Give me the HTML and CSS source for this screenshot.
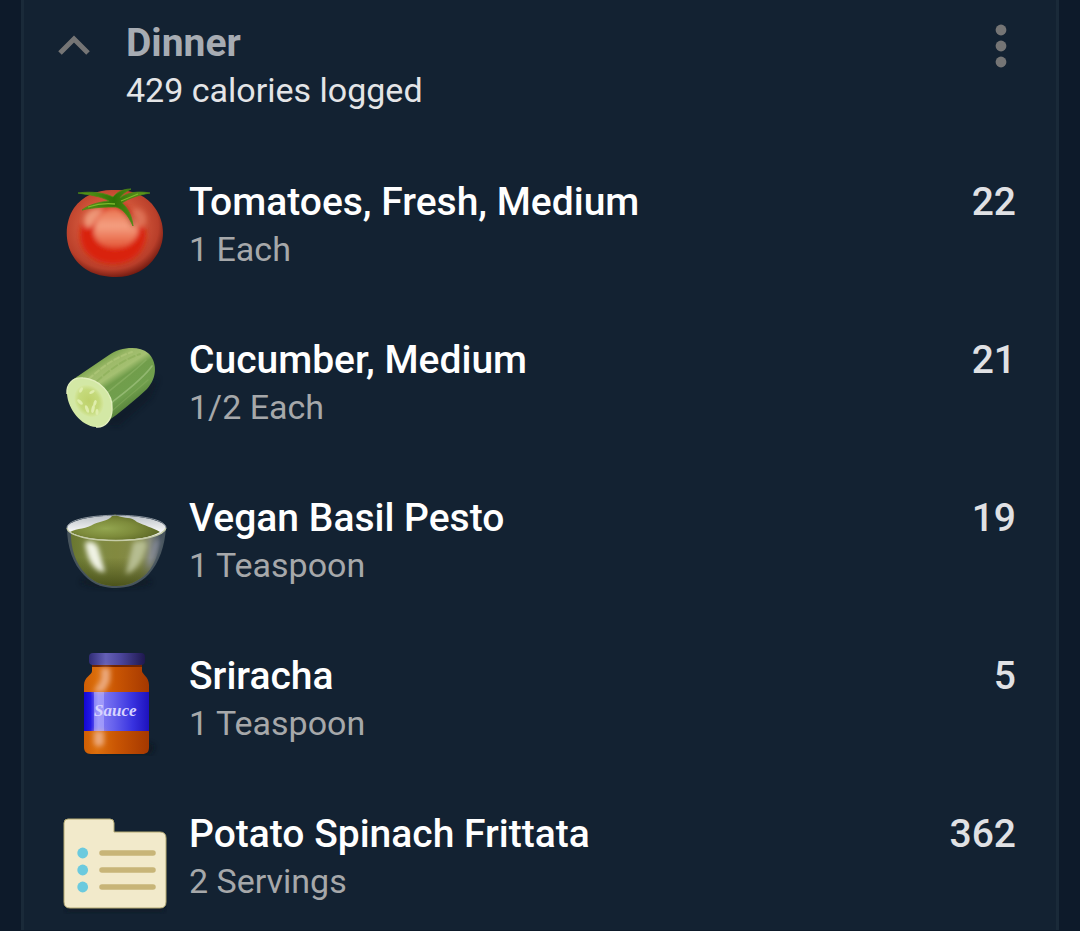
FILE: index.html
```html
<!DOCTYPE html>
<html lang="en">
<head>
  <meta charset="UTF-8">
  <meta name="viewport" content="width=device-width, initial-scale=1.0">
  <title>Dinner</title>
  <link rel="stylesheet" href="styles.css">
</head>
<body>
  <main class="meal">
    <header class="meal-header">
      <button class="icon-button toggle" type="button" aria-label="Collapse">
        <svg width="32" height="20" viewBox="0 0 32 20"><path d="M2 18 L16 4 L30 18" fill="none" stroke="#757575" stroke-width="5"/></svg>
      </button>
      <div class="meal-text">
        <h1 class="meal-title">Dinner</h1>
        <p class="meal-total">429 calories logged</p>
      </div>
      <button class="icon-button menu" type="button" aria-label="More options">
        <svg width="12" height="44" viewBox="0 0 12 44" fill="#757575"><circle cx="6" cy="6" r="5.4"/><circle cx="6" cy="22" r="5.4"/><circle cx="6" cy="38" r="5.4"/></svg>
      </button>
    </header>

    <ul class="foods">
      <li class="food">
        <svg class="food-icon" viewBox="0 0 104 104" aria-hidden="true">
          <defs>
            <radialGradient id="tomatoSkin" cx="46%" cy="42%" r="60%">
              <stop offset="0" stop-color="#dc6a4c"/>
              <stop offset=".55" stop-color="#cf5338"/>
              <stop offset=".82" stop-color="#b93f2a"/>
              <stop offset="1" stop-color="#6e180f"/>
            </radialGradient>
            <linearGradient id="tomatoShine" x1="0" y1="0" x2="0" y2="1">
              <stop offset="0" stop-color="#e8714d"/>
              <stop offset=".45" stop-color="#f5a082"/>
              <stop offset="1" stop-color="#e35535"/>
            </linearGradient>
            <linearGradient id="stem" x1="0" y1="0" x2="1" y2="0">
              <stop offset="0" stop-color="#5e9a1c"/>
              <stop offset=".5" stop-color="#2f7206"/>
              <stop offset="1" stop-color="#6a9c22"/>
            </linearGradient>
            <filter id="soft" x="-30%" y="-30%" width="160%" height="160%"><feGaussianBlur stdDeviation="2.4"/></filter>
          </defs>
          <path d="M52 12C67 11 84 17 92 30C102 44 103 63 93 78C84 92 70 99 53 99C35 99 19 93 10 78C1 64 2 43 11 30C20 17 36 11 52 12Z" fill="url(#tomatoSkin)"/>
          <g filter="url(#soft)">
            <path d="M17 58C17 40 31 28 50 28C69 28 83 41 83 59C80 77 67 86 50 86C33 86 18 76 17 58Z" fill="#d92008"/>
            <path d="M24 50C18 43 22 33 32 31L41 30L29 48Z" fill="#ee9677"/>
            <path d="M68 33C74 28 84 33 83 43C82 49 77 51 74 48Z" fill="#dd7155"/>
            <path d="M31 53C33 40 40 30 52 30C65 33 75 43 75 55C71 66 62 70 52 70C41 70 31 64 31 53Z" fill="url(#tomatoShine)"/>
          </g>
          <path d="M54 24C61 29 67 37 71 48" fill="none" stroke="#8a2b16" stroke-width="5" opacity=".5" filter="url(#soft)"/>
          <path d="M15 15C29 13 42 15 50 19C54 14 60 11 68 11C64 13 59 16 57 20C65 14 76 13 87 15C76 17 66 20 59 25C64 29 69 37 70 48C65 37 60 31 53 29C43 29 32 29 19 32C27 26 37 24 46 23C38 18 26 17 15 15Z" fill="url(#stem)" stroke="#4c8a14" stroke-width=".8"/>
          <path d="M25 29C34 26 44 25 52 26M58 23L75 16" fill="none" stroke="#7fb82c" stroke-width="1.3"/>
        </svg>
        <div class="food-text">
          <h2 class="food-name">Tomatoes, Fresh, Medium</h2>
          <p class="food-amount">1 Each</p>
        </div>
        <span class="food-calories">22</span>
      </li>

      <li class="food">
        <svg class="food-icon" viewBox="0 0 104 104" aria-hidden="true">
          <defs>
            <linearGradient id="cucumberSkin" gradientUnits="userSpaceOnUse" x1="34" y1="22" x2="66" y2="72">
              <stop offset="0" stop-color="#6f9c45"/>
              <stop offset=".2" stop-color="#9dba69"/>
              <stop offset=".38" stop-color="#a4c071"/>
              <stop offset=".5" stop-color="#719d4b"/>
              <stop offset=".78" stop-color="#709f4d"/>
              <stop offset="1" stop-color="#57833a"/>
            </linearGradient>
            <radialGradient id="cucumberCore">
              <stop offset="0" stop-color="#bed16a"/>
              <stop offset=".7" stop-color="#c5da7c"/>
              <stop offset="1" stop-color="#d5e8a2"/>
            </radialGradient>
          </defs>
          <path d="M40 88L85 50L96 42L88 62L56 90Z" fill="#0b1722" opacity=".5" filter="url(#soft)"/>
          <path d="M8 46C11 42 14 41 18 38L46 19C57 11 76 9 85 17C94 25 95 41 84 53C73 63 57 77 42 87Z" fill="url(#cucumberSkin)"/>
          <g fill="none" stroke-linecap="round" opacity=".6">
            <path d="M26 43C39 31 51 22 69 16" stroke="#b5cb7e" stroke-width="2" stroke-dasharray="5 3"/>
            <path d="M33 46C49 32 60 24 77 18" stroke="#8aae57" stroke-width="2" stroke-dasharray="7 3"/>
            <path d="M44 57C58 45 72 35 83 24" stroke="#8fb568" stroke-width="1.5"/>
            <path d="M48 67C62 56 79 44 89 30" stroke="#a9c988" stroke-width="1.6"/>
            <path d="M49 75C61 64 74 54 85 44" stroke="#85ab5d" stroke-width="1.2"/>
          </g>
          <path d="M4 58C3 48 10 41 20 42C36 43 50 57 49 73C49 84 42 92 33 91C18 90 5 73 4 58Z" fill="#d3e8a5"/>
          <path d="M4 58C3 48 10 41 20 42C36 43 50 57 49 73C49 84 42 92 33 91" fill="none" stroke="#e2efbd" stroke-width="1.4"/>
          <ellipse cx="26" cy="65" rx="14" ry="17" transform="rotate(-32 26 65)" fill="url(#cucumberCore)"/>
          <g fill="#dfedac">
            <ellipse cx="18" cy="54" rx="1.5" ry="3" transform="rotate(30 18 54)"/>
            <ellipse cx="29" cy="56" rx="1.5" ry="3" transform="rotate(60 29 56)"/>
            <ellipse cx="17" cy="66" rx="1.6" ry="3.5" transform="rotate(-45 17 66)"/>
            <ellipse cx="24" cy="73" rx="1.6" ry="4" transform="rotate(-20 24 73)"/>
            <ellipse cx="30" cy="73" rx="1.6" ry="4" transform="rotate(12 30 73)"/>
            <ellipse cx="32" cy="67" rx="1.5" ry="3" transform="rotate(20 32 67)"/>
            <ellipse cx="34" cy="76" rx="1.5" ry="3"/>
          </g>
        </svg>
        <div class="food-text">
          <h2 class="food-name">Cucumber, Medium</h2>
          <p class="food-amount">1/2 Each</p>
        </div>
        <span class="food-calories">21</span>
      </li>

      <li class="food">
        <svg class="food-icon" viewBox="0 0 104 104" aria-hidden="true">
          <defs>
            <linearGradient id="bowl" x1="0" y1="0" x2="1" y2="0">
              <stop offset="0" stop-color="#69762f"/>
              <stop offset=".3" stop-color="#7f8a42"/>
              <stop offset=".5" stop-color="#82893f"/>
              <stop offset=".76" stop-color="#858b4c"/>
              <stop offset=".87" stop-color="#85897a"/>
              <stop offset="1" stop-color="#3d4a58"/>
            </linearGradient>
            <linearGradient id="bowlShade" x1="0" y1="0" x2="0" y2="1">
              <stop offset=".5" stop-color="#3e4612" stop-opacity="0"/>
              <stop offset="1" stop-color="#3e4612" stop-opacity=".8"/>
            </linearGradient>
            <linearGradient id="rim" x1="0" y1="0" x2="0" y2="1">
              <stop offset="0" stop-color="#bcc2c7"/>
              <stop offset=".6" stop-color="#f2f3f4"/>
            </linearGradient>
            <radialGradient id="pesto" cx="40%" cy="55%" r="65%">
              <stop offset="0" stop-color="#93a650"/>
              <stop offset=".5" stop-color="#7d8b3b"/>
              <stop offset="1" stop-color="#586323"/>
            </radialGradient>
          </defs>
          <ellipse cx="53" cy="88" rx="36" ry="6" fill="#0a141e" opacity=".5" filter="url(#soft)"/>
          <path d="M4 33C4 53 10 70 21 81C31 92 43 94 53 94C64 94 76 91 86 80C96 69 102 52 103 33Z" fill="#47545c"/>
          <path d="M8 35C7 54 13 71 23 80C32 90 43 92 53 92C64 92 75 88 84 79C93 69 98 53 99 35Z" fill="url(#bowl)"/>
          <path d="M8 35C7 54 13 71 23 80C32 90 43 92 53 92C64 92 75 88 84 79C93 69 98 53 99 35Z" fill="url(#bowlShade)"/>
          <g filter="url(#soft)">
            <path d="M22 49C28 45 35 49 36 57L42 78C31 78 24 65 22 49Z" fill="#f0f3e4"/>
            <path d="M70 49C75 46 83 46 84 50C81 64 74 77 63 80C65 68 68 60 70 49Z" fill="#b6bd91"/>
            <path d="M91 48L97 44C95 57 90 68 84 74Z" fill="#9295ad" opacity=".7"/>
          </g>
          <ellipse cx="53.5" cy="34" rx="49.5" ry="12.5" fill="url(#rim)"/>
          <path d="M7 38C14 34 24 35 31 30C38 27 45 27 49 22C51 20 53 20 55 22C62 25 68 22 74 28C82 32 89 33 97 38C87 44 70 46 53 46C34 46 18 44 7 38Z" fill="url(#pesto)"/>
          <path d="M4 34C5 42 28 46.5 53 46.5C79 46.5 101 42 103 34" fill="none" stroke="#c6cca8" stroke-width="1.3"/>
          <path d="M4 34C4 17 103 17 103 34" fill="none" stroke="#8c969f" stroke-width="1"/>
        </svg>
        <div class="food-text">
          <h2 class="food-name">Vegan Basil Pesto</h2>
          <p class="food-amount">1 Teaspoon</p>
        </div>
        <span class="food-calories">19</span>
      </li>

      <li class="food">
        <svg class="food-icon" viewBox="0 0 104 104" aria-hidden="true">
          <defs>
            <linearGradient id="jar" x1="0" y1="0" x2="1" y2="0">
              <stop offset="0" stop-color="#cf5e04"/>
              <stop offset=".2" stop-color="#dc6f0c"/>
              <stop offset=".5" stop-color="#c95503"/>
              <stop offset="1" stop-color="#a53800"/>
            </linearGradient>
            <linearGradient id="lid" x1="0" y1="0" x2="1" y2="0">
              <stop offset="0" stop-color="#302c75"/>
              <stop offset=".3" stop-color="#6460b6"/>
              <stop offset=".55" stop-color="#4d479e"/>
              <stop offset="1" stop-color="#1e184e"/>
            </linearGradient>
            <linearGradient id="label" x1="0" y1="0" x2="1" y2="0">
              <stop offset="0" stop-color="#1307d3"/>
              <stop offset=".1" stop-color="#2118e5"/>
              <stop offset=".22" stop-color="#8780f5"/>
              <stop offset=".45" stop-color="#6762ed"/>
              <stop offset=".75" stop-color="#3832df"/>
              <stop offset="1" stop-color="#1d11bd"/>
            </linearGradient>
          </defs>
          <path d="M83 90L92 94L88 102H30Z" fill="#0a141e" opacity=".7" filter="url(#soft)"/>
          <path d="M29 12H79V19C79 22 86 25 86 33V95C86 100 84 102 79 102H28C23 102 21 99 21 95V33C21 25 29 23 29 19Z" fill="url(#jar)"/>
          <rect x="26" y="1" width="56" height="12" rx="4" fill="url(#lid)"/>
          <path d="M29 14H79" stroke="#702400" stroke-width="2"/>
          <rect x="21" y="40" width="65" height="39" fill="url(#label)"/>
          <path d="M38 16H47V26C47 32 43 35 41 40H31C33 33 38 31 38 24ZM31 79H41V92Q36 97 31 92Z" fill="#eba779" filter="url(#soft)"/>
          <rect x="31" y="40" width="10" height="39" fill="#b8b4ff" opacity=".55"/>
          <text class="jar-text" x="31" y="64">Sauce</text>
        </svg>
        <div class="food-text">
          <h2 class="food-name">Sriracha</h2>
          <p class="food-amount">1 Teaspoon</p>
        </div>
        <span class="food-calories">5</span>
      </li>

      <li class="food">
        <svg class="food-icon" viewBox="0 0 104 104" aria-hidden="true">
          <path d="M5 97H99Q103 97 103 93V97Q102 102 96 102H8Q2 102 1 96Z" fill="#0a141e" opacity=".5" filter="url(#soft)"/>
          <path d="M5 9H47Q51 9 51 13V22H97Q103 22 103 28V92Q103 98 97 98H7Q1 98 1 92V13Q1 9 5 9Z" fill="#f2eacb" stroke="#b5aa73" stroke-width="1"/>
          <g fill="#6bcade"><circle cx="19.7" cy="43" r="5.4"/><circle cx="19.7" cy="60" r="5.4"/><circle cx="19.7" cy="77" r="5.4"/></g>
          <path d="M39 43H90M39 60H90M39 77H90" stroke="#c8b578" stroke-width="5.5" stroke-linecap="round"/>
        </svg>
        <div class="food-text">
          <h2 class="food-name">Potato Spinach Frittata</h2>
          <p class="food-amount">2 Servings</p>
        </div>
        <span class="food-calories">362</span>
      </li>
    </ul>
  </main>
</body>
</html>
```

FILE: styles.css
```css
* { box-sizing: border-box; }
body {
  margin: 0;
  background: #0d1a2a;
  color: #ffffff;
  font-family: Roboto, sans-serif;
}
h1, h2, p, ul {
  margin: 0;
  padding: 0;
}
.meal {
  margin: 0 21px;
  background: #132232;
  border: 3px solid #1a2a39;
  border-top: none;
  border-bottom: none;
}
.meal-header {
  display: flex;
  align-items: flex-start;
  padding: 18px 49px 40px 34px;
}
.icon-button {
  display: flex;
  padding: 0;
  border: none;
  background: none;
  cursor: pointer;
}
.toggle { padding-top: 17px; }
.menu { padding-top: 6px; }
.meal-text {
  flex: 1;
  padding-left: 36px;
}
.meal-title,
.food-name,
.food-calories {
  font-size: 39px;
  line-height: 50px;
  font-weight: 500;
}
.meal-title {
  font-weight: 700;
  color: #a7acb3;
}
.meal-total,
.food-amount {
  font-size: 34px;
  line-height: 44px;
}
.meal-total { color: #e4e5e7; }
.food-amount { color: #a6a8aa; }
.foods { list-style: none; }
.food {
  display: flex;
  align-items: flex-start;
  padding: 25px 40px 28px 39px;
}
.food:last-child { padding-bottom: 16px; }
.food-icon {
  width: 104px;
  height: 104px;
  margin-top: 1px;
}
.food-text {
  flex: 1;
  padding-left: 22px;
}
.food-calories { color: #e0e1e4; }
.jar-text {
  font: italic bold 17px "Liberation Serif", serif;
  fill: #d8d4ff;
}
```
